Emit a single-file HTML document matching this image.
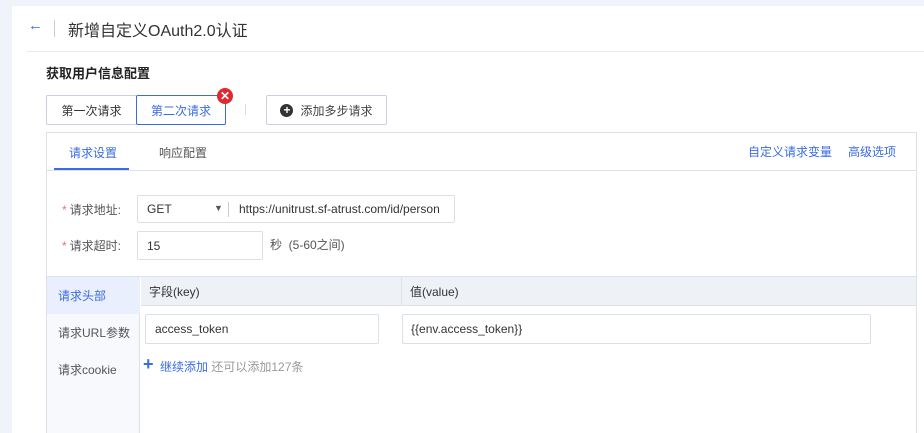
<!DOCTYPE html><html><head><meta charset="utf-8"><style>
*{box-sizing:border-box;margin:0;padding:0}
body{width:924px;height:433px;overflow:hidden;background:#f0f3fa;font-family:"Liberation Sans","Noto Sans CJK SC",sans-serif;font-size:12px;color:#333;position:relative}
.a{position:absolute}
.card{left:12px;top:6px;width:912px;height:427px;background:#fff}
.inp{position:absolute;border:1px solid #dcdfe6;border-radius:2px;background:#fff;padding-left:9px;display:flex;align-items:center;color:#333}
.btn{position:absolute;border:1px solid #c9d1de;border-radius:2px;background:#fff;display:flex;align-items:center;justify-content:center}
.req{color:#f56c6c;margin-right:3px}
.lab{color:#555}
</style></head><body>
<div class="a card"></div>
<div class="a" style="left:28px;top:17px;color:#3b6be0;font-size:15px">←</div>
<div class="a" style="left:54px;top:20px;width:1px;height:17px;background:#ccc"></div>
<div class="a" style="left:68px;top:17px;font-size:16px;color:#333">新增自定义OAuth2.0认证</div>
<div class="a" style="left:27px;top:51px;width:897px;height:1px;background:#e8ebf0"></div>
<div class="a" style="left:46px;top:63px;font-size:13px;font-weight:bold;color:#222">获取用户信息配置</div>
<div class="btn" style="left:46px;top:95px;width:91px;height:30px;color:#333">第一次请求</div>
<div class="btn" style="left:136px;top:95px;width:90px;height:30px;border-color:#3b6be0;color:#3b6be0">第二次请求</div>
<div class="a" style="left:217px;top:88px;width:16px;height:16px;border-radius:50%;background:#e0282e;color:#fff;font-weight:bold;font-size:12px;line-height:16px;text-align:center">✕</div>
<div class="a" style="left:245px;top:104px;width:1px;height:11px;background:#ddd"></div>
<div class="btn" style="left:266px;top:95px;width:121px;height:30px;color:#444"><span style="display:inline-block;width:13px;height:13px;border-radius:50%;background:#333;color:#fff;font-weight:bold;font-size:12px;line-height:13px;text-align:center;margin-right:7px">+</span>添加多步请求</div>
<div class="a" style="left:46px;top:132px;width:871px;height:301px;border:1px solid #dde1e8;border-bottom:none"></div>
<div class="a" style="left:47px;top:170px;width:869px;height:1px;background:#dde1e8"></div>
<div class="a" style="left:69px;top:144px;color:#3b6be0">请求设置</div>
<div class="a" style="left:54px;top:168px;width:75px;height:2px;background:#3b6be0"></div>
<div class="a" style="left:159px;top:144px;color:#555">响应配置</div>
<div class="a" style="left:748px;top:143px;color:#3b6be0">自定义请求变量</div>
<div class="a" style="left:848px;top:143px;color:#3b6be0">高级选项</div>
<div class="a lab" style="left:62px;top:201px"><span class="req">*</span>请求地址:</div>
<div class="inp" style="left:137px;top:195px;width:318px;height:28px">GET<span style="position:absolute;left:76px;top:7px;font-size:9px;color:#555">▼</span><span style="position:absolute;left:90px;top:6px;width:1px;height:15px;background:#ccc"></span><span style="position:absolute;left:101px;top:6px;white-space:nowrap;width:214px;overflow:hidden">https://unitrust.sf-atrust.com/id/person</span></div>
<div class="a lab" style="left:62px;top:237px"><span class="req">*</span>请求超时:</div>
<div class="inp" style="left:137px;top:231px;width:126px;height:29px">15</div>
<div class="a lab" style="left:270px;top:236px">秒 &nbsp;(5-60之间)</div>
<div class="a" style="left:47px;top:276px;width:869px;height:1px;background:#dde1e8"></div>
<div class="a" style="left:47px;top:277px;width:93px;height:156px;background:#f8f9fc;border-right:1px solid #dde1e8"></div>
<div class="a" style="left:47px;top:277px;width:93px;height:37px;background:#e9effc"></div>
<div class="a" style="left:58px;top:287px;color:#3b6be0">请求头部</div>
<div class="a" style="left:58px;top:324px;color:#555">请求URL参数</div>
<div class="a" style="left:58px;top:361px;color:#555">请求cookie</div>
<div class="a" style="left:141px;top:277px;width:775px;height:29px;background:#eef1f6;border-bottom:1px solid #dde1e8"></div>
<div class="a" style="left:401px;top:277px;width:1px;height:29px;background:#dde1e8"></div>
<div class="a" style="left:149px;top:283px">字段(key)</div>
<div class="a" style="left:410px;top:283px">值(value)</div>
<div class="inp" style="left:145px;top:314px;width:234px;height:30px">access_token</div>
<div class="inp" style="left:402px;top:314px;width:469px;height:30px;padding-left:8px">{{env.access_token}}</div>
<div class="a" style="left:143px;top:355px;color:#3b6be0;font-size:18px;font-weight:bold;line-height:18px">+</div>
<div class="a" style="left:160px;top:358px;color:#3b6be0">继续添加 <span style="color:#999">还可以添加127条</span></div>
</body></html>
